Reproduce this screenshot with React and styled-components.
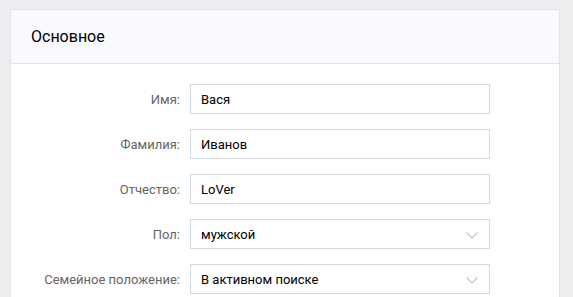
import React from 'react';
import styled, {createGlobalStyle} from 'styled-components';

const GlobalStyle = createGlobalStyle`
  html, body {
    margin: 0;
    padding: 0;
    background: #edeef0;
    font-family: Roboto, "Liberation Sans", sans-serif;
  }
`;

const Page = styled.div`
  padding: 9px 13px 0 10px;
  height: 297px;
  box-sizing: border-box;
  overflow: hidden;
`;

const Card = styled.div`
  background: #fff;
  border: 1px solid #e1e3e7;
  border-bottom: none;
  height: 320px;
`;

const CardHeader = styled.div`
  height: 53px;
  display: flex;
  align-items: center;
  padding-left: 20px;
  background: #f9fafd;
  border-bottom: 1px solid #e1e3e7;
  font-size: 16px;
  color: #000;
`;

const Form = styled.div`
  padding-top: 20px;
  display: flex;
  flex-direction: column;
  gap: 15px;
`;

const Row = styled.div`
  display: grid;
  grid-template-columns: 169px 300px;
  column-gap: 10px;
  align-items: center;
`;

const Label = styled.div`
  text-align: right;
  font-size: 13px;
  color: #656565;
`;

const Field = styled.div`
  position: relative;
  height: 30px;
  box-sizing: border-box;
  border: 1px solid #d3d9de;
  display: flex;
  align-items: center;
  padding-left: 10px;
  font-size: 13px;
  color: #000;
`;

const Chevron = styled.svg`
  position: absolute;
  right: 11px;
  top: 12px;
`;

const fields = [
  {label: 'Имя:', value: 'Вася'},
  {label: 'Фамилия:', value: 'Иванов'},
  {label: 'Отчество:', value: 'LoVer'},
  {label: 'Пол:', value: 'мужской', select: true},
  {label: 'Семейное положение:', value: 'В активном поиске', select: true},
];

function App() {
  return (
      <Page>
        <GlobalStyle/>
        <Card>
          <CardHeader>Основное</CardHeader>
          <Form>
            {fields.map(f => (
                <Row key={f.label}>
                  <Label>{f.label}</Label>
                  <Field>
                    {f.value}
                    {f.select && (
                        <Chevron width="12" height="7" viewBox="0 0 12 7">
                          <path d="M0.5 0.5 L6 6 L11.5 0.5" fill="none" stroke="#bfc4ca" strokeWidth="1.2"/>
                        </Chevron>
                    )}
                  </Field>
                </Row>
            ))}
          </Form>
        </Card>
      </Page>
  );
}

export default App;
